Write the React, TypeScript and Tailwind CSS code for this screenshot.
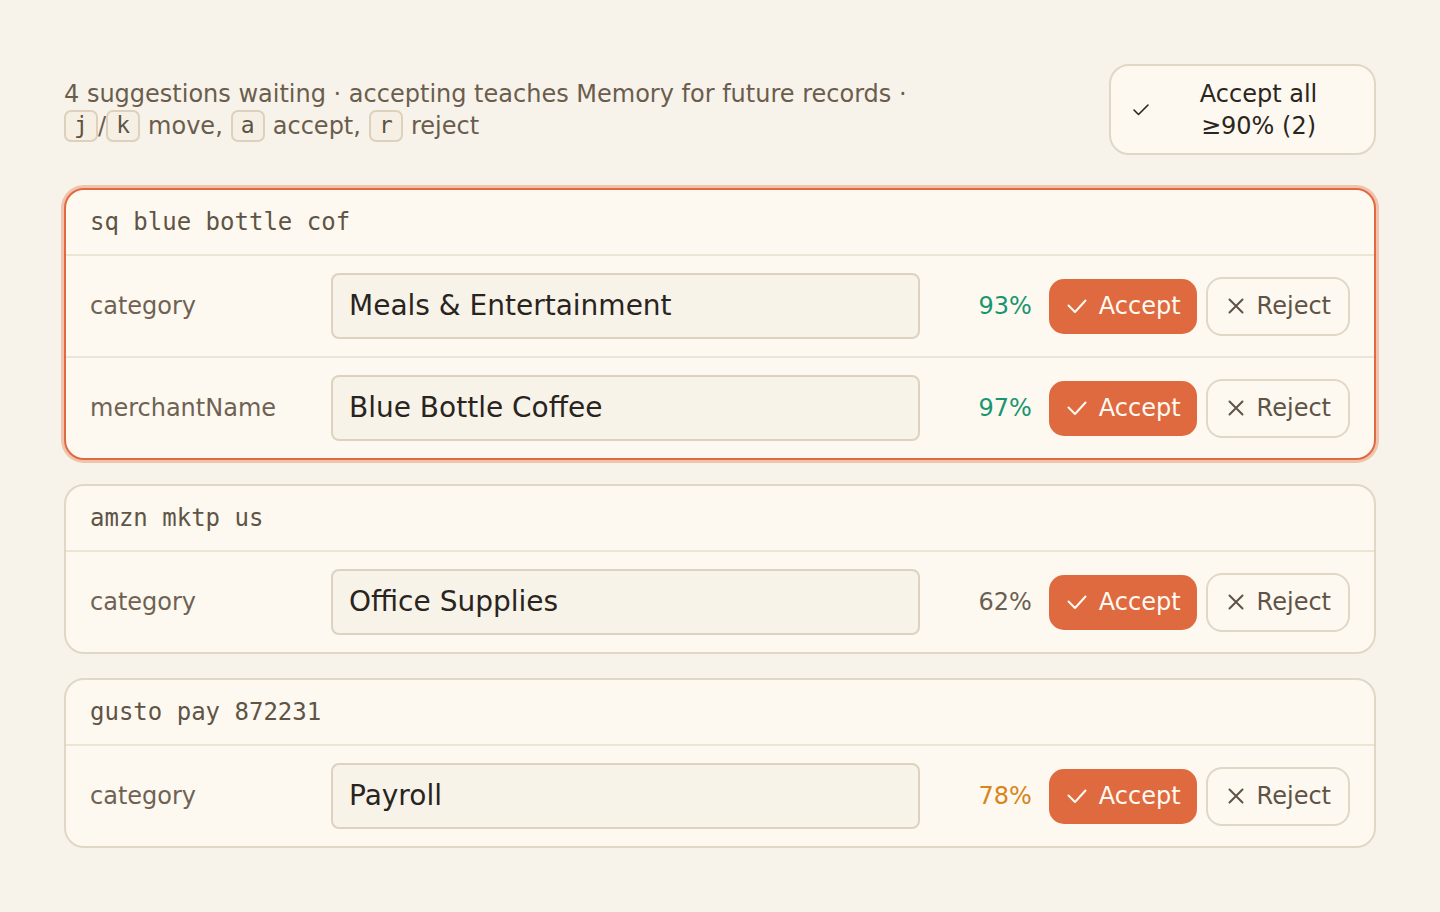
import React from "react";

type Row = { field: string; value: string; pct: number };
type Suggestion = { raw: string; focused?: boolean; rows: Row[] };

const suggestions: Suggestion[] = [
  {
    raw: "sq blue bottle cof",
    focused: true,
    rows: [
      { field: "category", value: "Meals & Entertainment", pct: 93 },
      { field: "merchantName", value: "Blue Bottle Coffee", pct: 97 },
    ],
  },
  {
    raw: "amzn mktp us",
    rows: [{ field: "category", value: "Office Supplies", pct: 62 }],
  },
  {
    raw: "gusto pay 872231",
    rows: [{ field: "category", value: "Payroll", pct: 78 }],
  },
];

const sans = "font-['DejaVu_Sans','Liberation_Sans',sans-serif]";
const mono = "font-['DejaVu_Sans_Mono','Liberation_Mono',monospace]";

function pctColor(p: number) {
  if (p >= 90) return "text-[#179670]";
  if (p >= 75) return "text-[#d8851a]";
  return "text-[#6b5f51]";
}

function CheckIcon({ className = "" }: { className?: string }) {
  return (
    <svg width="20" height="15" viewBox="0 0 20 15" fill="none" className={className}>
      <path d="M1.5 6.5 L8 13 L18.5 1.5" stroke="currentColor" strokeWidth="2" strokeLinecap="round" strokeLinejoin="round" />
    </svg>
  );
}

function XIcon() {
  return (
    <svg width="16" height="16" viewBox="0 0 16 16" fill="none">
      <path d="M1.5 1.5 L14.5 14.5 M14.5 1.5 L1.5 14.5" stroke="currentColor" strokeWidth="2" strokeLinecap="round" />
    </svg>
  );
}

function Kbd({ children }: { children: React.ReactNode }) {
  return (
    <span
      className={`${mono} inline-flex h-[32px] w-[34px] items-center justify-center rounded-[7px] border-2 border-[#ddd1bd] bg-[#f6f0e4] align-middle text-[23px] leading-none text-[#5d5244]`}
    >
      {children}
    </span>
  );
}

function SuggestionRow({ row }: { row: Row }) {
  return (
    <div className="flex items-center border-t-2 border-[#ece4d5] py-[17px] pl-[24px] pr-[24px]">
      <div className="w-[241px] shrink-0 text-[24px] text-[#6f6253]">{row.field}</div>
      <div className="flex h-[66px] flex-1 items-center rounded-[8px] border-2 border-[#ddd2bf] bg-[#f8f3e9] px-[16px] text-[28px] text-[#2a241e]">
        {row.value}
      </div>
      <div className={`w-[112px] shrink-0 text-right text-[24px] ${pctColor(row.pct)}`}>{row.pct}%</div>
      <button className="ml-[17px] flex h-[55px] items-center gap-[12px] rounded-[15px] bg-[#e06a40] pl-[18px] pr-[16px] text-[24px] text-[#fffaf2]">
        <CheckIcon />
        <span>Accept</span>
      </button>
      <button className="ml-[9px] flex h-[59px] items-center gap-[13px] rounded-[16px] border-2 border-[#e1d7c6] bg-[#fdf9f0] pl-[20px] pr-[17px] text-[24px] text-[#5e5346]">
        <XIcon />
        <span>Reject</span>
      </button>
    </div>
  );
}

function SuggestionCard({ s }: { s: Suggestion }) {
  const frame = s.focused
    ? "border-[#e06a40] ring-[3px] ring-[#f1c3ac]"
    : "border-[#e1d7c6]";
  return (
    <div className={`overflow-hidden rounded-[20px] border-2 bg-[#fdf9f0] ${frame}`}>
      <div className={`${mono} flex h-[64px] items-center px-[24px] text-[24px] text-[#5f5445]`}>{s.raw}</div>
      {s.rows.map((r) => (
        <SuggestionRow key={r.field} row={r} />
      ))}
    </div>
  );
}

export default function App() {
  return (
    <div className={`${sans} min-h-[912px] w-full bg-[#f7f3ea] px-[64px] pt-[64px] pb-[48px]`}>
      <div className="flex items-center justify-between">
        <div className="text-[24px] leading-[32px] text-[#6b5d4d]">
          <div>4 suggestions waiting · accepting teaches Memory for future records ·</div>
          <div className="flex items-center">
            <Kbd>j</Kbd>
            <span>/</span>
            <Kbd>k</Kbd>
            <span className="mx-[8px]">move,</span>
            <Kbd>a</Kbd>
            <span className="mx-[8px]">accept,</span>
            <Kbd>r</Kbd>
            <span className="ml-[8px]">reject</span>
          </div>
        </div>
        <button className="flex h-[91px] w-[267px] items-center rounded-[20px] border-2 border-[#e1d7c6] bg-[#fdf9f0] pl-[22px] pr-[14px] text-[24px] leading-[32px] text-[#2b2520]">
          <svg width="16" height="12" viewBox="0 0 16 12" fill="none" className="shrink-0">
            <path d="M1 6 L5.5 10.5 L15 1" stroke="currentColor" strokeWidth="1.6" strokeLinecap="round" strokeLinejoin="round" />
          </svg>
          <span className="ml-[8px] flex-1 text-center">
            Accept all
            <br />
            ≥90% (2)
          </span>
        </button>
      </div>
      <div className="mt-[33px] flex flex-col gap-[24px]">
        {suggestions.map((s) => (
          <SuggestionCard key={s.raw} s={s} />
        ))}
      </div>
    </div>
  );
}
